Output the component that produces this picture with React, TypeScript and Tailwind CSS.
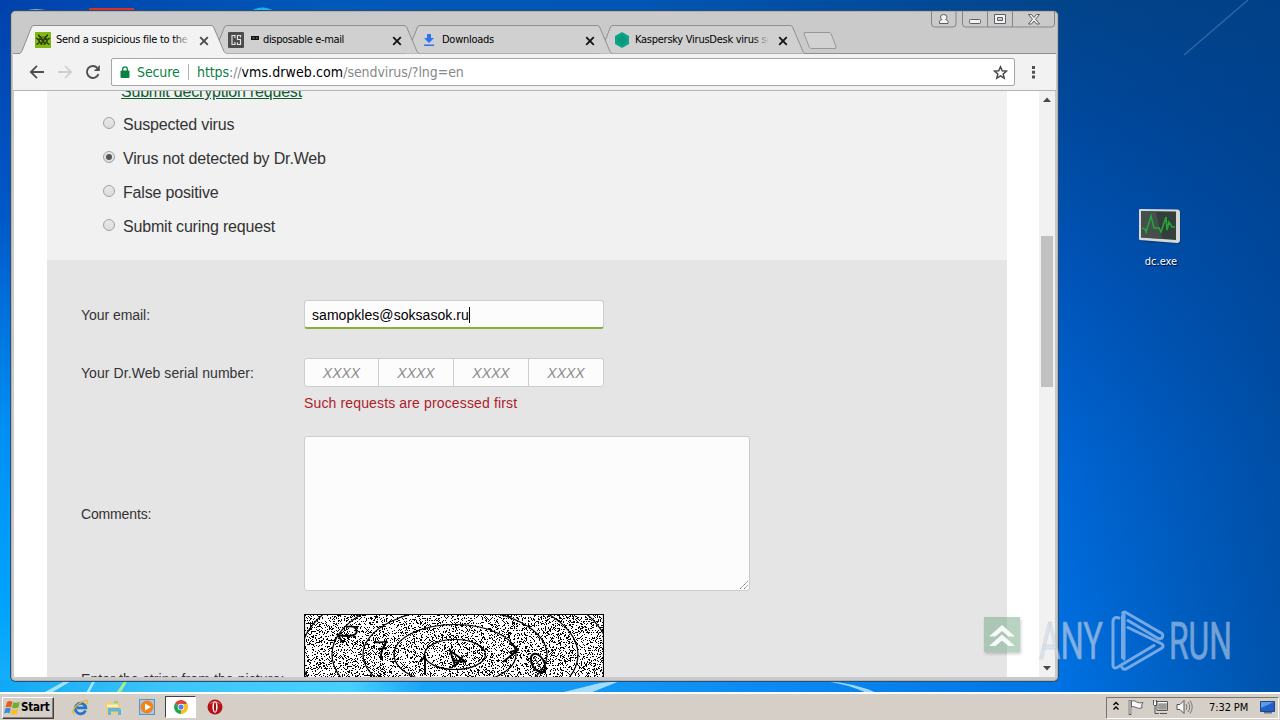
import type { ReactNode } from "react";

const UI = "font-['DejaVu_Sans_Condensed','DejaVu_Sans',sans-serif]";

/* ---------- desktop ---------- */

function Wallpaper() {
  return (
    <svg className="absolute inset-0" width="1280" height="720" viewBox="0 0 1280 720">
      <defs>
        <linearGradient id="left" x1="0" y1="0" x2="0" y2="1">
          <stop offset="0" stopColor="#0042ac" />
          <stop offset="0.3" stopColor="#0058c8" />
          <stop offset="0.6" stopColor="#0090f4" />
          <stop offset="0.85" stopColor="#00a4fc" />
          <stop offset="1" stopColor="#22b4fa" />
        </linearGradient>
        <linearGradient id="right" x1="0" y1="0" x2="0" y2="1">
          <stop offset="0" stopColor="#02448a" />
          <stop offset="0.17" stopColor="#0049a0" />
          <stop offset="0.4" stopColor="#0056bc" />
          <stop offset="0.65" stopColor="#0066d6" />
          <stop offset="1" stopColor="#0074e6" />
        </linearGradient>
        <linearGradient id="edge" x1="0" y1="0" x2="1" y2="0">
          <stop offset="0" stopColor="#003a7c" stopOpacity="0" />
          <stop offset="1" stopColor="#003e86" stopOpacity="0.6" />
        </linearGradient>
        <linearGradient id="top" x1="0" y1="0" x2="1" y2="0">
          <stop offset="0" stopColor="#0042ac" />
          <stop offset="0.3" stopColor="#0058b8" />
          <stop offset="0.6" stopColor="#0056b4" />
          <stop offset="1" stopColor="#02448a" />
        </linearGradient>
        <linearGradient id="bottom" x1="0" y1="0" x2="1" y2="0">
          <stop offset="0" stopColor="#10a8f4" />
          <stop offset="0.15" stopColor="#3cc4f8" />
          <stop offset="0.33" stopColor="#48d0fc" />
          <stop offset="0.4" stopColor="#1aa4f8" />
          <stop offset="0.7" stopColor="#0c8cf2" />
          <stop offset="1" stopColor="#0074e4" />
        </linearGradient>
      </defs>
      <rect width="1060" height="720" fill="url(#left)" />
      <rect width="1060" height="12" fill="url(#top)" />
      <rect x="1056" width="224" height="720" fill="url(#right)" />
      <rect x="1056" width="224" height="720" fill="url(#edge)" />
      <rect y="680" width="1060" height="14" fill="url(#bottom)" />
      <path d="M1184 55 1248 0" stroke="#4f86bd" strokeWidth="1.5" opacity="0.55" />
      <path d="m43 693 24-13h6l-22 13zM86 693l7-13h3l-7 13z" fill="#c8f0ff" opacity="0.8" />
      <path d="m117 692 8-12h3l-7 12z" fill="#b4e88c" />
      <path d="m560 693 40-10 20-2-30 12zM825 681q30 2 52 12h-10q-20-9-42-12z" fill="#e0f8ff" opacity="0.7" />
      <path d="M24 11q12-4 25 0z" fill="#8fa7d8" />
      <path d="M89 8h45v4H89z" fill="#d9302c" />
      <path d="M249 12q13-9 27 0z" fill="#18b4f0" />
    </svg>
  );
}

/* ---------- tab strip ---------- */

function Tab({ title, icon, active, order, fade }: { title: ReactNode; icon: ReactNode; active?: boolean; order: string; fade?: boolean }) {
  return (
    <div className={`relative h-7 w-[193px] shrink-0 ${order}`}>
      <svg className="absolute left-0 top-0 overflow-visible" width="206" height="29" viewBox="0 0 206 29">
        <path d="M0 28.5 2 26 11.5 2Q12 .5 14 .5H191Q193 .5 193.600 2L204 26.500 206 28.500" fill={active ? "#f2f2f2" : "#d0d0d0"} stroke="#8f8f8f" />
        {active && <path d="M.5 28h205v1.500H.5z" fill="#f2f2f2" />}
      </svg>
      <div className="relative flex h-full items-center pl-[15px] pt-px">
        <span className="flex h-4 w-4 shrink-0 items-center justify-center">{icon}</span>
        <span className={`relative ml-[5px] w-[134px] overflow-hidden whitespace-nowrap text-[11px] leading-4 tracking-[-0.26px] text-black ${UI}`}>
          {title}
          {fade && <span className={`absolute right-0 top-0 h-4 w-4 bg-linear-to-r from-transparent ${active ? "to-[#f2f2f2]" : "to-[#d0d0d0]"}`} />}
        </span>
        <svg className="ml-[9px] mt-0.5" width="10" height="10" viewBox="0 0 10 10">
          <path d="m1.200 1.200 7.600 7.600m0-7.600-7.600 7.600" stroke={active ? "#4a4a4a" : "#161616"} strokeWidth="1.900" />
        </svg>
      </div>
    </div>
  );
}

const DrWebIcon = () => (
  <svg width="16" height="16" viewBox="0 0 16 16">
    <path fill="#83b812" d="M0 0h16v16H0z" />
    <path d="M3.500 2.500q0 2 2.500 2.500M12.500 2.500q0 2-2.500 2.500M1 6l3 2M15 6l-3 2M1.500 12.500l3-2M14.500 12.500l-3-2" stroke="#1e3008" strokeWidth="1.300" fill="none" />
    <path d="M4 6q4-3 8 0l1 3-3 4H6L3 9z" fill="#2b430c" />
    <path d="m4.500 7.500 2.500 1.500-1 1.500zM11.500 7.500 9 9l1 1.500zM7 11.500h2v1H7zM7.500 5h1v2h-1z" fill="#9ccc34" />
  </svg>
);

const CsIcon = () => (
  <svg width="16" height="16" viewBox="0 0 16 16">
    <rect width="16" height="16" rx="1" fill="#4c4c4c" />
    <path d="M7 6V3.500H4v9h3V10M12.500 5.500v-2h-3v4h3v5h-3v-2" stroke="#e4e4e4" strokeWidth="1.200" fill="none" />
  </svg>
);

const DownloadIcon = () => (
  <svg width="16" height="16" viewBox="0 0 16 16">
    <path d="M6 2h4v4h3l-5 5-5-5h3zM3 12.500h10V14H3z" fill="#2f73ee" />
  </svg>
);

const KasperskyIcon = () => (
  <svg width="16" height="16" viewBox="0 0 16 16">
    <path d="m8 0 7 4v8l-7 4-7-4V4z" fill="#0ba586" />
    <path d="m8 3 4 2.500v5L8 13l-4-2.500v-5z" fill="#08997c" />
  </svg>
);

function DisposableTitle() {
  return (
    <span className="pl-[2px] tracking-[-0.35px]">
      <svg className="mr-1 inline-block align-[2px]" width="8" height="5" viewBox="0 0 8 5">
        <path d="M0 0h8v4H0z" fill="#111" />
        <path d="M1.500 1.500h2v1h-2zM5 1.500h1.500v1H5z" fill="#999" />
      </svg>
      disposable e-mail
    </span>
  );
}

function TitleBar() {
  return (
    <div className="relative flex h-[42px] items-end pl-[9px]">
      <Tab order="z-40" active fade title="Send a suspicious file to the" icon={<DrWebIcon />} />
      <Tab order="z-30" title={<DisposableTitle />} icon={<CsIcon />} />
      <Tab order="z-20" title="Downloads" icon={<DownloadIcon />} />
      <Tab order="z-10" fade title="Kaspersky VirusDesk virus sc" icon={<KasperskyIcon />} />
      <svg className="mb-[3px] ml-[10px]" width="36" height="18" viewBox="0 0 36 18">
        <path d="M3 .5h24q1.500 0 2 1l5 13q.5 2-1 2H9.500q-1.500 0-2-1L2 2Q1.500.5 3 .5z" fill="#d2d2d2" stroke="#979797" />
      </svg>
      <svg className="absolute right-[2px] top-0" width="125" height="18" viewBox="0 0 125 18">
        <path d="M.5 0v13q0 3 3 3H22q3 0 3-3V0M31.500 0v13q0 3 3 3h86q3 0 3-3V0M56.500 0v16M81.500 0v16" fill="none" stroke="#858585" />
        <g fill="#f3f3f3" stroke="#5d5d66">
          <path d="M8.500 12.500v-2q0-1.500 2.500-2-1.500-1-1.500-2.500 0-2.500 3.200-2.500T16 6q0 1.500-1.500 2.500 2.500.5 2.500 2v2z" />
          <rect x="38.500" y="8.500" width="11" height="4" rx="1" />
          <path d="M63.500 3.500h11v9h-11zM66.500 6.500h5v3h-5z" fillRule="evenodd" />
          <path d="M97.500 3.500h3l2.500 3 2.500-3h3l-4 4.700 4 4.800h-3l-2.500-3-2.500 3h-3l4-4.800z" />
        </g>
      </svg>
    </div>
  );
}

/* ---------- toolbar ---------- */

function Toolbar() {
  return (
    <div className="mx-[2px] flex h-[38px] items-center border-y border-t-[#8f8f8f] border-b-[#b3b3b3] bg-[#f2f2f2]">
      <svg className="ml-[16px]" width="16" height="16" viewBox="0 0 16 16">
        <path d="M15 8H2M8 1.800 1.800 8 8 14.200" stroke="#4f4f4f" strokeWidth="1.800" fill="none" />
      </svg>
      <svg className="ml-3" width="16" height="16" viewBox="0 0 16 16">
        <path d="M1 8h13M8 1.800 14.200 8 8 14.200" stroke="#d0d0d0" strokeWidth="1.800" fill="none" />
      </svg>
      <svg className="ml-3" width="16" height="16" viewBox="0 0 16 16">
        <path d="M13.500 10.200A6 6 0 1 1 12.300 3.800" stroke="#4f4f4f" strokeWidth="1.900" fill="none" />
        <path d="M14.800 1v6H8.800z" fill="#4f4f4f" />
      </svg>
      <div className={`ml-[10px] flex h-7 w-[904px] items-center rounded-[2px] border border-[#a5a5a5] bg-white pl-2 text-[14px] leading-5 ${UI}`}>
        <svg width="10" height="12" viewBox="0 0 10 12">
          <path d="M1.500 4.500h7q1 0 1 1V11q0 1-1 1h-7q-1 0-1-1V5.500q0-1 1-1z" fill="#0b8043" />
          <path d="M2.700 5V3q0-2.200 2.300-2.200T7.300 3v2" stroke="#0b8043" strokeWidth="1.300" fill="none" />
        </svg>
        <span className="ml-[7px] w-[44px] tracking-[-0.1px] text-[#0b8043]">Secure</span>
        <span className="ml-[7px] h-4 w-px bg-[#b5b5b5]" />
        <span className="ml-2 whitespace-nowrap tracking-[-0.08px] text-[#888]">
          <span className="text-[#0b8043]">https</span>://<span className="tracking-[0.1px] text-black">vms.drweb.com</span>/sendvirus/?lng=en
        </span>
        <svg className="ml-auto mr-[6px]" width="15" height="15" viewBox="0 0 15 15">
          <path d="m7.500 1.800 1.700 3.900 4.200.4-3.200 2.800 1 4.200-3.700-2.200-3.700 2.200 1-4.200L1.600 6.100l4.200-.4z" stroke="#4a4a4a" strokeWidth="1.500" fill="none" />
        </svg>
      </div>
      <svg className="ml-4" width="5" height="14" viewBox="0 0 5 14">
        <path d="M1 1h3v3H1zM1 5.700h3v3H1zM1 10.400h3v3H1z" fill="#4f4f4f" />
      </svg>
    </div>
  );
}

/* ---------- page ---------- */

function RadioRow({ label, checked }: { label: string; checked?: boolean }) {
  return (
    <div className="flex h-[34px] items-center">
      <span className="mb-[5px] flex h-3 w-3 items-center justify-center rounded-full border border-[#a2a2a2] bg-linear-to-b from-[#e9e9e9] to-[#dcdcdc]">
        {checked && <span className="h-[6px] w-[6px] rounded-full bg-[#555]" />}
      </span>
      <span className="ml-2 text-[16px] tracking-[-0.17px] text-[#333]">{label}</span>
    </div>
  );
}

function buildNoise(width: number, height: number) {
  let seed = 20177;
  let d = "";
  for (let y = 1; y < height; y++) {
    for (let x = 1; x < width - 1; x++) {
      seed = (seed * 1103515245 + 12345) % 2147483648;
      if (seed / 2147483648 < 0.25) d += `M${x} ${y}h1v1h-1z`;
    }
  }
  return d;
}

const NOISE = buildNoise(300, 63);

function Captcha() {
  return (
    <svg className="self-start" width="300" height="128" viewBox="0 0 300 128">
      <path fill="#fff" d="M0 0h300v128H0z" />
      <path d={NOISE} fill="#000" shapeRendering="crispEdges" />
      <g fill="none" stroke="#000" strokeWidth="1.200">
        <ellipse cx="151" cy="40.500" rx="30.500" ry="15" />
        <ellipse cx="151" cy="40.500" rx="61" ry="30" />
        <ellipse cx="151" cy="40.500" rx="92" ry="46" />
        <ellipse cx="151" cy="40.500" rx="123" ry="62" />
        <ellipse cx="151" cy="40.500" rx="154" ry="78" />
        <path d="M.5 128V.5h299V128" />
      </g>
      <g fill="none" stroke="#000" strokeWidth="1.900">
        <path d="m39 29-5-8q10 2 16 0 4-2 2-6-2-4-10-2" />
        <path d="M70 28q9 1 13-1-7 9-6 19M74 35l9-1" />
        <path d="M116 47q4-2 5-6v20" />
        <path d="m145 36 17 12-14-2M146 36l5 16 8-10" />
        <path d="m199 48 15-12-8-8M206 38l8-2" />
        <ellipse cx="234" cy="49" rx="6" ry="10" transform="rotate(-30 234 49)" />
        <path d="m230 43 8 13" strokeWidth="1" />
      </g>
    </svg>
  );
}

function Page() {
  return (
    <div className="mx-[3px] flex h-[586px] overflow-hidden bg-white font-['Liberation_Sans',Arial,sans-serif]">
      <div className="ml-[33px] w-[960px]">
        <div className="h-[169px] overflow-hidden bg-[#f1f1f1] pl-14">
          <div className="-mt-[9px] ml-[18px] h-[26px] text-[16px] leading-[19px] tracking-[-0.2px] text-[#0f5a30] underline">Submit decryption request</div>
          <RadioRow label="Suspected virus" />
          <RadioRow label="Virus not detected by Dr.Web" checked />
          <RadioRow label="False positive" />
          <RadioRow label="Submit curing request" />
        </div>
        <div className="h-[417px] overflow-hidden bg-[#e5e5e5] pl-[34px] pt-10 text-[14px] text-[#333]">
          <div className="flex h-[29px] items-center">
            <span className="w-[223px] pt-0.5 tracking-[-0.05px]">Your email:</span>
            <div className="flex h-[29px] w-[300px] items-center rounded-[3px] border border-[#cdcdcd] border-b-2 border-b-[#8aae3a] bg-[#fcfcfc] pl-[7px] pt-[3px] text-black">
              <span className="tracking-[0.05px]">samopkles@soksasok.ru</span>
              <span className="mb-0.5 h-4 w-px bg-black" />
            </div>
          </div>
          <div className="mt-[29px] flex h-[29px] items-center">
            <span className="w-[223px] pt-0.5 tracking-[0.07px]">Your Dr.Web serial number:</span>
            <div className="grid h-[29px] w-[300px] grid-cols-[74px_75px_75px_74px] overflow-hidden rounded-[3px] border border-[#cdcdcd] bg-[#fcfcfc]">
              {["a", "b", "c", "d"].map((k) => (
                <span key={k} className="flex items-center justify-center border-r border-[#cdcdcd] pt-0.5 text-[14px] italic text-[#8a8a8a] last:border-r-0">XXXX</span>
              ))}
            </div>
          </div>
          <div className="ml-[223px] mt-[7px] h-[42px] leading-[18px] tracking-[0.14px] text-[#ae1c2c]">Such requests are processed first</div>
          <div className="flex h-[155px] items-center">
            <span className="w-[223px] pt-0.5 tracking-[-0.15px]">Comments:</span>
            <div className="flex h-[155px] w-[446px] items-end justify-end rounded-[3px] border border-[#cdcdcd] bg-[#fcfcfc]">
              <svg width="10" height="10" viewBox="0 0 10 10"><path d="m1 9 8-8M5 9l4-4" stroke="#777" strokeDasharray="1.400 .5" /></svg>
            </div>
          </div>
          <div className="mt-[23px] flex h-32 items-center">
            <span className="w-[223px] pt-0.5 tracking-[0.1px]">Enter the string from the picture:</span>
            <Captcha />
          </div>
        </div>
      </div>
      <div className="ml-8 flex w-4 flex-col items-center bg-[#f1f1f1]">
        <svg className="mt-[6px] shrink-0" width="8" height="5" viewBox="0 0 8 5"><path d="M0 5 4 .5 8 5z" fill="#484848" /></svg>
        <div className="mt-[134px] h-[151px] w-3 shrink-0 bg-[#c1c1c1]" />
        <svg className="mb-[6px] mt-auto shrink-0" width="8" height="5" viewBox="0 0 8 5"><path d="M0 0h8L4 4.500z" fill="#484848" /></svg>
      </div>
    </div>
  );
}

/* ---------- taskbar ---------- */

function Taskbar() {
  return (
    <div className={`flex h-[28px] items-center border-t-2 border-white bg-[#d6cfc8] ${UI}`}>
      <div className="ml-[2px] mt-px flex h-[22px] w-[52px] items-center border border-b-[#404040] border-l-white border-r-[#404040] border-t-white bg-[#d6cfc8] shadow-[inset_-1px_-1px_0_#85807a]">
        <svg className="ml-px shrink-0" width="16" height="16" viewBox="0 0 16 16">
          <path d="M3 2q3-2 5.500 0L7 7.500q-2-1.500-5.500 0z" fill="#e85a20" />
          <path d="M9.300 2.300q3 1.200 6.500-.5L14.500 7.500q-3 1.500-6.500.2z" fill="#6cb033" />
          <path d="M1.300 8.500q3-1.500 5.500 0l-1.300 5q-2-1.500-5.500 0z" fill="#3a8ee0" />
          <path d="M7.700 9q3 1.500 6.500-.3l-1.300 5.300q-3 1.500-6.500 0z" fill="#f6be28" />
        </svg>
        <span className="ml-px text-[11.5px] font-bold tracking-[-0.2px] text-black">Start</span>
      </div>
      <svg className="ml-[18px]" width="17" height="17" viewBox="0 0 17 17">
        <path d="M13.500 11.500A5.300 5.300 0 1 1 13.800 8.800H5" stroke="#2277cc" strokeWidth="2.800" fill="none" />
        <path d="M2 15Q-1 11 6 5.500 14 0 15.500 2q.5 1-1 3" stroke="#eab82c" strokeWidth="1.400" fill="none" />
      </svg>
      <svg className="ml-4" width="17" height="17" viewBox="0 0 17 17">
        <path d="M1 3h5l1 1.500h8V15H1z" fill="#edd078" />
        <path d="M2 5.500h11V8H2z" fill="#fbf0b8" />
        <path d="M3 9h11q2 0 2 2v5h-3v-3.500H6V16H3z" fill="#64b4dc" />
        <path d="M9 2h4v2.500H9z" fill="#a8cc6c" />
      </svg>
      <svg className="ml-[17px]" width="17" height="17" viewBox="0 0 17 17">
        <rect x=".5" y=".5" width="15" height="15" fill="#a6cbea" stroke="#5d93c4" />
        <circle cx="8" cy="8" r="6.500" fill="#f08418" />
        <path d="m6 4.500 6 3.500-6 3.500z" fill="#fff" />
      </svg>
      <div className="ml-[9px] flex h-[22px] w-[31px] items-center justify-center border border-b-white border-l-[#404040] border-r-white border-t-[#404040] bg-white">
        <svg width="14" height="14" viewBox="0 0 16 16">
          <path d="M8 8 1.100 4A8 8 0 0 1 14.900 4z" fill="#dc4335" />
          <path d="M8 8 14.900 4A8 8 0 0 1 8 16z" fill="#fbc116" />
          <path d="M8 8v8A8 8 0 0 1 1.100 4z" fill="#2ba24c" />
          <path d="M8 4.500h6.900L16 8l-8 8 3-6z" fill="#fbc116" />
          <circle cx="8" cy="8" r="3.700" fill="#fff" />
          <circle cx="8" cy="8" r="2.900" fill="#4484f0" />
        </svg>
      </div>
      <svg className="ml-[11px]" width="16" height="16" viewBox="0 0 16 16">
        <circle cx="8" cy="8" r="7.500" fill="#b51218" />
        <path d="M2 5q6-6 12 0-6-2-12 0z" fill="#e2686a" />
        <ellipse cx="8" cy="8" rx="2.600" ry="5.800" fill="#fff" />
        <ellipse cx="8" cy="8" rx="1.100" ry="4.700" fill="#a00f14" />
      </svg>
      <div className="ml-auto mr-[1px] mt-px flex h-[22px] w-[173px] items-center border border-b-white border-l-[#77726c] border-r-white border-t-[#77726c]">
        <svg className="mb-1 ml-[5px]" width="8" height="10" viewBox="0 0 8 10"><path d="M1.500 4 4 1.500 6.500 4M1.500 8.500 4 6l2.500 2.500" stroke="#000" strokeWidth="1.400" fill="none" /></svg>
        <svg className="mb-0.5 ml-2" width="17" height="16" viewBox="0 0 17 16">
          <path d="M2 1v15" stroke="#555" strokeWidth="2.600" /><path d="M2 1.500V15" stroke="#fff" />
          <path d="M3.500 2q3-1 5 1 3 1.500 6.500.5-2 2-1 5.500-4 1-6-.5-2-1.500-4.500-.5z" fill="#f8f8f8" stroke="#666" />
        </svg>
        <svg className="mb-0.5 ml-[7px]" width="16" height="16" viewBox="0 0 16 16">
          <path d="M5.500 3.500h10v8h-10z" fill="#9a9a9a" stroke="#fff" strokeWidth="1.400" />
          <path d="M5 2.500h10.500v9H5zM8 14.500h7" fill="none" stroke="#555" />
          <path d="M1.500 1v4q0 1.500 1.500 1.500v8h4M4.500 1v5.500H3" stroke="#555" fill="none" /><path d="M2 3h2v3H2z" fill="#fff" />
        </svg>
        <svg className="mb-0.5 ml-[8px]" width="17" height="16" viewBox="0 0 17 16">
          <path d="M1 5.500h3L8 1.500v13l-4-4H1z" fill="#fafafa" stroke="#555" />
          <path d="M10 5q2 3 0 6M12 3q3.500 5 0 10M14 1.500q4.500 6.500 0 13" stroke="#777" fill="none" />
        </svg>
        <span className="ml-[16px] w-[42px] whitespace-nowrap pt-px text-[11px] tracking-[-0.1px] text-black">7:32 PM</span>
        <svg className="mb-0.5 ml-auto mr-[2px]" width="16" height="14" viewBox="0 0 16 14">
          <path d="M.5 1.500h14v10H.5z" fill="#2160c8" stroke="#234880" /><path d="M1 2h13L1 8z" fill="#5a9aea" /><path d="M4 12h8v1.500H4z" fill="#6c7480" />
        </svg>
      </div>
    </div>
  );
}

/* ---------- overlays ---------- */

function Watermark() {
  return (
    <svg className="absolute left-[1036px] top-[606px] z-50" width="210" height="70" viewBox="0 0 210 70" fontFamily="Roboto, sans-serif" fontSize="51">
      <g opacity="0.62" fill="#b9cdea" stroke="#b9cdea" strokeWidth=".7">
        <text x="3" y="53" textLength="64" lengthAdjust="spacingAndGlyphs" fill="#cfdcec" stroke="#b4bccb">ANY</text>
        <text x="133" y="53" textLength="63" lengthAdjust="spacingAndGlyphs">RUN</text>
      </g>
      <g fill="none" stroke="#9cc0ee" strokeWidth="3" opacity="0.75" strokeLinejoin="round" strokeLinecap="round">
        <path d="M88 53V9q-3-3 1-3L126 27.500q1.500 2 0 4.500l-3 1L92 14.500" />
        <path d="M83 12q-6-2-6 4V60q1 3 4 1.500L118 39.500" />
        <path d="M92 21.500 126 38q2 2 0 4L90 63q-3 1-4-1.500" />
        <path d="M86 52V10" strokeWidth="2" />
      </g>
    </svg>
  );
}

export default function App() {
  return (
    <div className="relative h-[720px] w-[1280px] overflow-hidden">
      <Wallpaper />
      <div className="relative flex h-[720px] flex-col justify-between">
        <div className="ml-[11px] mt-[11px] h-[670px] w-[1047px] overflow-hidden rounded-[5px] bg-[#cacaca] shadow-[inset_0_0_0_1px_#b5b0ad,0_0_0_1px_#284f79]">
          <TitleBar />
          <Toolbar />
          <Page />
        </div>
        <Taskbar />
      </div>
      <div className="absolute left-[1126px] top-[206px] flex w-[68px] flex-col items-center">
        <svg width="44" height="42" viewBox="0 0 44 42">
          <path d="m3 6 38-1q2 0 2 2v29q0 2-2 2L5 36z" fill="#10305c" opacity="0.5" />
          <path d="M1 4q0-1 1-1l37 .5q3 0 3 3V34q0 3-3 3L2 34q-1 0-1-1z" fill="#d6d8da" />
          <path d="m3 5 35 .5V34L3 31.500z" fill="#33403a" />
          <path d="m3 5 15 .2L24 33 3 31.500z" fill="#525a56" opacity="0.6" />
          <path d="m4 22 3 1 1 3 5-16 3 12h5l2 4 5-15 1 13 2-8 3 5h3" stroke="#22a838" strokeWidth="1.500" fill="none" />
        </svg>
        <span className={`ml-0.5 mt-1.5 text-[11px] leading-4 text-white [text-shadow:1px_1px_1px_#002] ${UI}`}>dc.exe</span>
      </div>
      <div className="absolute left-[984px] top-[617px] flex h-[35px] w-[36px] items-center justify-center bg-[#73a887]/50 shadow-[1px_2px_3px_#0003]">
        <svg width="28" height="28" viewBox="0 0 28 28"><path d="M1 15.500 14 4l13 11.500h-6.500L14 10l-6.500 5.500zM1 25l13-11.500L27 25h-6.500L14 19.500 7.500 25z" fill="#fff" opacity="0.9" /></svg>
      </div>
      <Watermark />
    </div>
  );
}
